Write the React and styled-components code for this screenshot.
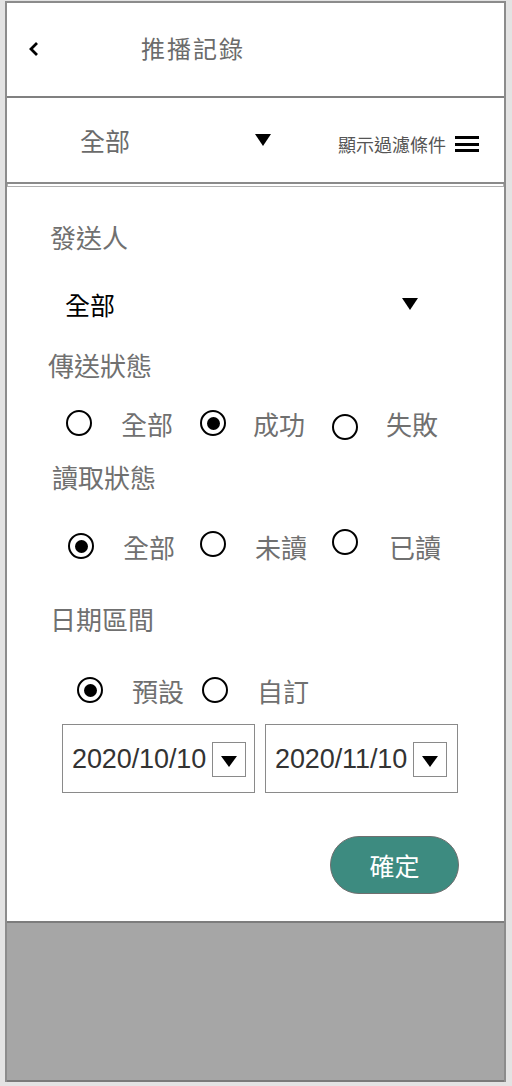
import React from "react"
import styled, { createGlobalStyle } from "styled-components"

const GlobalStyle = createGlobalStyle`
  html, body {
    margin: 0;
    padding: 0;
    background: #e3e3e3;
  }
  body {
    font-family: "Noto Sans CJK TC", "Noto Sans", sans-serif;
  }
`

const Frame = styled.div`
  width: 497px;
  margin: 1px 0 0 5px;
  border: 2px solid #8c8c8c;
  border-bottom: none;
  background: #ffffff;
  display: flex;
  flex-direction: column;
`

const Header = styled.div`
  height: 95px;
  display: flex;
  align-items: center;
  padding-bottom: 4px;
  box-sizing: border-box;
  border-bottom: 2px solid #808080;
`

const BackButton = styled.div`
  width: 134px;
  padding-left: 20px;
  padding-top: 2px;
  display: flex;
  align-items: center;
  box-sizing: border-box;
`

const Title = styled.div`
  font-size: 24px;
  color: #6b6b6b;
  letter-spacing: 2px;
`

const FilterBar = styled.div`
  height: 84px;
  display: flex;
  align-items: center;
  border-bottom: 2px solid #8a8a8a;
  box-shadow: 0 3px 0 -1px #ffffff, 0 3px 0 0 #b0b0b0;
  margin-bottom: 3px;
`

const FilterValue = styled.div`
  font-size: 25px;
  color: #6b6b6b;
  margin-left: 73px;
  width: 175px;
`

const Triangle = styled.div`
  width: 0;
  height: 0;
  border-left: ${p => p.size / 2}px solid transparent;
  border-right: ${p => p.size / 2}px solid transparent;
  border-top: ${p => Math.round(p.size * 0.68)}px solid #000;
`

const FilterToggle = styled.div`
  margin-left: auto;
  margin-right: 25px;
  margin-top: 8px;
  display: flex;
  align-items: center;
  gap: 9px;
  font-size: 18px;
  color: #555;
`

const Hamburger = styled.div`
  width: 24px;
  display: flex;
  flex-direction: column;
  gap: 3.5px;
  & span {
    display: block;
    height: 3px;
    background: #000;
  }
`

const Panel = styled.div`
  height: 736px;
  padding: 34px 0 0 0;
  box-sizing: border-box;
  display: flex;
  flex-direction: column;
  border-bottom: 2px solid #7c7c7c;
`

const Label = styled.div`
  font-size: 26px;
  line-height: 32px;
  color: #707070;
  padding-left: ${p => p.indent}px;
  margin-top: ${p => p.top || 0}px;
`

const SelectRow = styled.div`
  height: 40px;
  margin-top: 31px;
  padding-left: 58px;
  padding-right: 86px;
  display: flex;
  align-items: center;
  justify-content: space-between;
  font-size: 25px;
  color: #000;
`

const RadioRow = styled.div`
  height: 36px;
  margin-top: ${p => p.top}px;
  padding-left: ${p => p.indent}px;
  display: flex;
  align-items: center;
  gap: ${p => p.gap || 28}px;
`

const Option = styled.div`
  display: flex;
  align-items: center;
  gap: ${p => p.gap || 29}px;
  font-size: 26px;
  color: #707070;
`

const Circle = styled.div`
  width: 26px;
  height: 26px;
  box-sizing: border-box;
  border: 2.5px solid #000;
  border-radius: 50%;
  display: flex;
  align-items: center;
  justify-content: center;
  transform: translateY(${p => p.shift || 0}px);
  &::after {
    content: "";
    display: ${p => (p.checked ? "block" : "none")};
    width: 13px;
    height: 13px;
    border-radius: 50%;
    background: #000;
  }
`

const DateRow = styled.div`
  margin-top: 16px;
  padding-left: 55px;
  display: flex;
  gap: 10px;
`

const DateBox = styled.div`
  width: 193px;
  height: 69px;
  box-sizing: border-box;
  border: 1.5px solid #8a8a8a;
  display: flex;
  align-items: center;
  padding-left: 9px;
  padding-top: 2px;
  gap: 6px;
  font-family: "Liberation Sans", Arial, sans-serif;
  font-size: 27px;
  color: #333;
  letter-spacing: -0.1px;
`

const DateDrop = styled.div`
  width: 34px;
  height: 35px;
  box-sizing: border-box;
  border: 1px solid #8a8a8a;
  display: flex;
  align-items: center;
  justify-content: center;
  padding-top: 3px;
`

const ButtonRow = styled.div`
  margin-top: 43px;
  padding-right: 45px;
  display: flex;
  justify-content: flex-end;
`

const ConfirmButton = styled.button`
  width: 129px;
  height: 58px;
  border-radius: 29px;
  border: 1px solid #6f6f6f;
  background: #3d8b80;
  color: #fff;
  font-family: "Noto Sans CJK TC", "Noto Sans", sans-serif;
  font-size: 25px;
`

const Footer = styled.div`
  height: 157px;
  background: #a6a6a6;
  border-bottom: 2px solid #7a7a7a;
`

const Radio = ({ checked, shift, gap, children }) => (
  <Option gap={gap}>
    <Circle checked={checked} shift={shift} />
    {children}
  </Option>
)

const App = () => (
  <>
    <GlobalStyle />
    <Frame>
      <Header>
        <BackButton>
          <svg width="14" height="16" viewBox="0 0 14 16">
            <polyline points="10,2 4,8 10,14" fill="none" stroke="#000" strokeWidth="2.8" />
          </svg>
        </BackButton>
        <Title>推播記錄</Title>
      </Header>
      <FilterBar>
        <FilterValue>全部</FilterValue>
        <Triangle size={17} />
        <FilterToggle>
          顯示過濾條件
          <Hamburger>
            <span />
            <span />
            <span />
          </Hamburger>
        </FilterToggle>
      </FilterBar>
      <Panel>
        <Label indent={43}>發送人</Label>
        <SelectRow>
          全部
          <Triangle size={17} />
        </SelectRow>
        <Label indent={41} top={25}>傳送狀態</Label>
        <RadioRow top={24} indent={59} gap={27}>
          <Radio>全部</Radio>
          <Radio checked gap={27}>成功</Radio>
          <Radio shift={4} gap={28}>失敗</Radio>
        </RadioRow>
        <Label indent={45} top={20}>讀取狀態</Label>
        <RadioRow top={35} indent={61} gap={25}>
          <Radio checked>全部</Radio>
          <Radio shift={-2}>未讀</Radio>
          <Radio shift={-4} gap={31}>已讀</Radio>
        </RadioRow>
        <Label indent={43} top={39}>日期區間</Label>
        <RadioRow top={37} indent={70} gap={18}>
          <Radio checked>預設</Radio>
          <Radio>自訂</Radio>
        </RadioRow>
        <DateRow>
          <DateBox>
            2020/10/10
            <DateDrop>
              <Triangle size={16} />
            </DateDrop>
          </DateBox>
          <DateBox>
            2020/11/10
            <DateDrop>
              <Triangle size={16} />
            </DateDrop>
          </DateBox>
        </DateRow>
        <ButtonRow>
          <ConfirmButton>確定</ConfirmButton>
        </ButtonRow>
      </Panel>
      <Footer />
    </Frame>
  </>
)

export default App
